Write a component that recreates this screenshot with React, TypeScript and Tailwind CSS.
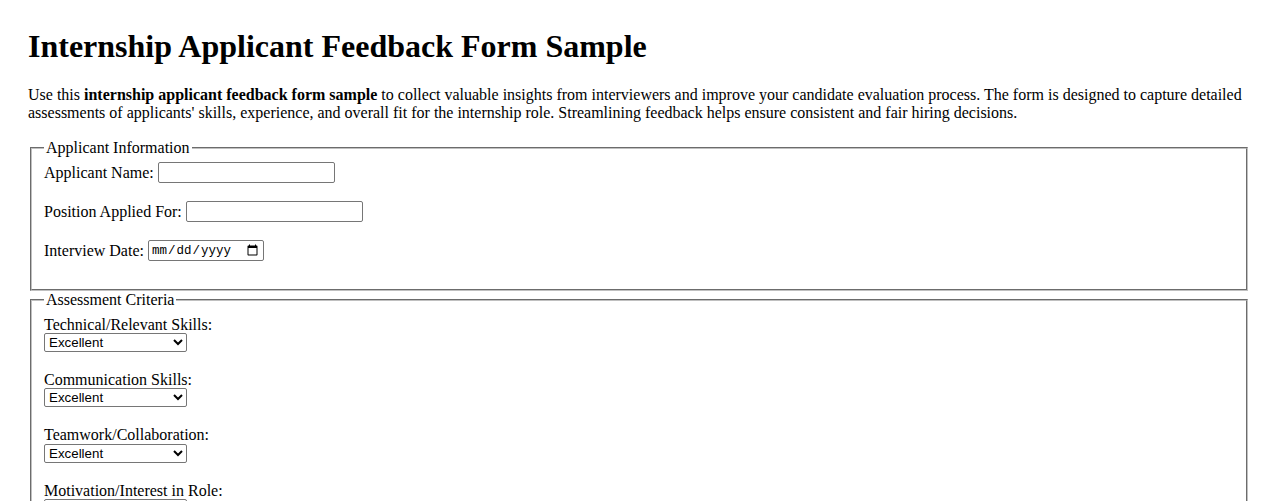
const ratings = ['Excellent', 'Good', 'Average', 'Poor']

const criteria = [
  'Technical/Relevant Skills:',
  'Communication Skills:',
  'Teamwork/Collaboration:',
  'Motivation/Interest in Role:',
  'Problem-Solving Ability:',
]

function TextRow({ label, type = 'text', width }: { label: string; type?: string; width: string }) {
  const font =
    type === 'date'
      ? "font-['Liberation_Mono',monospace] text-[12.5px]"
      : "font-['Liberation_Sans',sans-serif] text-[13.33px]"
  return (
    <div className="flex h-[21px] items-center">
      <label className="mr-[4px]">{label}</label>
      <input
        type={type}
        className={`${width} ${font} h-[21px] rounded-[2px] border border-[#767676] bg-white px-[2px]`}
      />
    </div>
  )
}

export default function App() {
  return (
    <div className="bg-white px-[28px] pt-[28px] pb-[40px] font-['Liberation_Serif',serif] text-[16px] leading-[18.4px] text-black">
      <h1 className="text-[32px] leading-[37px] font-bold">Internship Applicant Feedback Form Sample</h1>
      <p className="mt-[21px]">
        Use this <strong>internship applicant feedback form sample</strong> to collect valuable insights from
        interviewers and improve your candidate evaluation process. The form is designed to capture detailed
        assessments of applicants' skills, experience, and overall fit for the internship role. Streamlining feedback
        helps ensure consistent and fair hiring decisions.
      </p>

      <form className="mt-[16px]">
        <fieldset className="mx-[2px] border-2 border-[#c0c0c0] px-[12px] pt-[5px] pb-[28px] [border-style:groove]">
          <legend className="px-[2px]">Applicant Information</legend>
          <div className="flex flex-col gap-[18px]">
            <TextRow label="Applicant Name:" width="w-[177px]" />
            <TextRow label="Position Applied For:" width="w-[177px]" />
            <TextRow label="Interview Date:" type="date" width="w-[116px]" />
          </div>
        </fieldset>

        <fieldset className="mx-[2px] border-2 border-[#c0c0c0] px-[12px] pt-[6px] pb-[28px] [border-style:groove]">
          <legend className="px-[2px]">Assessment Criteria</legend>
          <div className="flex flex-col gap-[19px]">
            {criteria.map((c) => (
              <div key={c}>
                <label className="block">{c}</label>
                <select className="-mt-[1px] block h-[19px] w-[143px] rounded-[2px] border border-[#767676] bg-white pl-0 font-['Liberation_Sans',sans-serif] text-[13.33px]">
                  {ratings.map((r) => (
                    <option key={r}>{r}</option>
                  ))}
                </select>
              </div>
            ))}
          </div>
        </fieldset>
      </form>
    </div>
  )
}
